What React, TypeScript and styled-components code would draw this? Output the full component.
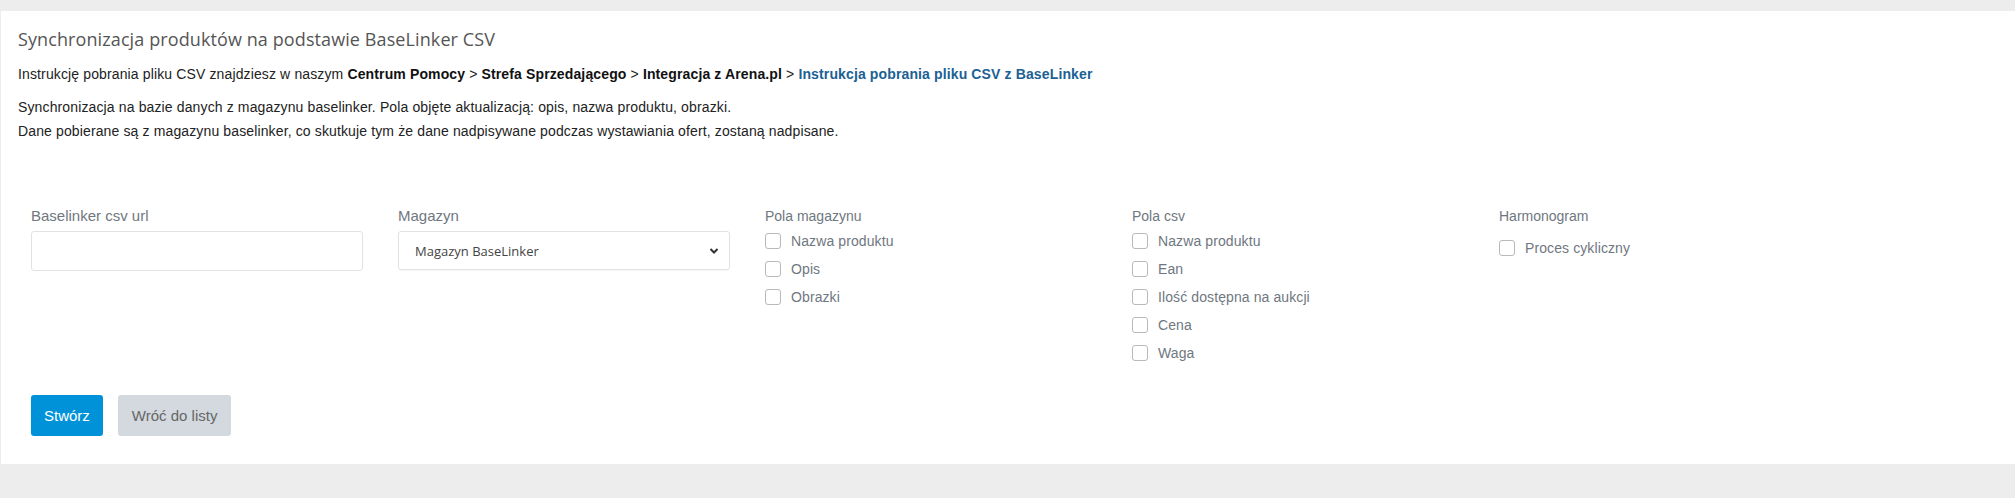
import React from "react";
import styled, { createGlobalStyle } from "styled-components";

const Global = createGlobalStyle`
  html, body { margin: 0; padding: 0; }
  body {
    background: #ededed;
    font-family: "Liberation Sans", Arial, sans-serif;
    width: 2015px;
    height: 498px;
    overflow: hidden;
  }
`;

const Page = styled.div`
  padding: 11px 0 0 1px;
`;

const Card = styled.section`
  background: #fff;
  height: 453px;
  box-sizing: border-box;
  padding: 16px 17px 0 17px;
`;

const Title = styled.h1`
  margin: 0;
  font-family: "Open Sans", sans-serif;
  font-weight: 400;
  font-size: 18px;
  line-height: 24px;
  letter-spacing: 0.1px;
  color: #555;
`;

const Text = styled.p<{ $top: number }>`
  margin: ${(p) => p.$top}px 0 0 0;
  font-size: 14px;
  line-height: 24px;
  letter-spacing: 0.13px;
  color: #222;
`;

const Strong = styled.b`
  font-weight: 700;
  color: #111;
`;

const Link = styled.a`
  font-weight: 700;
  color: #1b6193;
  text-decoration: none;
`;

const Form = styled.form`
  margin-top: 63px;
  padding-left: 13px;
`;

const Grid = styled.div`
  display: grid;
  grid-template-columns: repeat(5, 332px);
  column-gap: 35px;
  align-items: start;
`;

const Field = styled.div`
  display: flex;
  flex-direction: column;
`;

const Label = styled.label<{ $size?: number }>`
  font-size: ${(p) => p.$size ?? 14}px;
  line-height: 20px;
  color: #6f7780;
  margin-bottom: ${(p) => (p.$size ? 5 : 4)}px;
`;

const Input = styled.input`
  box-sizing: border-box;
  width: 100%;
  height: 40px;
  border: 1px solid #e2e2e2;
  border-radius: 3px;
  background: #fff;
  outline: none;
`;

const SelectBox = styled.div`
  box-sizing: border-box;
  width: 100%;
  height: 39px;
  border: 1px solid #e2e2e2;
  border-radius: 3px;
  box-shadow: 0 1px 1px rgba(0, 0, 0, 0.04);
  display: flex;
  align-items: center;
  justify-content: space-between;
  padding: 0 10px 0 16px;
  font-family: "Open Sans", sans-serif;
  font-size: 13px;
  color: #444;
`;

const CheckRow = styled.label`
  display: flex;
  align-items: center;
  gap: 10px;
  height: 28px;
  font-size: 14px;
  letter-spacing: 0.1px;
  color: #6f7780;
`;

const Box = styled.span`
  width: 16px;
  height: 16px;
  box-sizing: border-box;
  border: 1px solid #b9b9b9;
  border-radius: 3px;
  background: #fff;
`;

const CheckList = styled.div<{ $offset?: number }>`
  display: flex;
  flex-direction: column;
  margin-top: ${(p) => p.$offset ?? -3}px;
`;

const Buttons = styled.div`
  display: flex;
  gap: 15px;
  margin-top: 28px;
`;

const Button = styled.button<{ $primary?: boolean }>`
  height: 41px;
  padding: 0 ${(p) => (p.$primary ? 13 : 14)}px;
  border: none;
  border-radius: 3px;
  font-family: "Liberation Sans", Arial, sans-serif;
  font-size: 15px;
  background: ${(p) => (p.$primary ? "#0092d9" : "#d3d9de")};
  color: ${(p) => (p.$primary ? "#fff" : "#666")};
`;

const Chevron = () => (
  <svg width="10" height="8" viewBox="0 0 10 8">
    <path d="M1.5 2 L5 5.5 L8.5 2" stroke="#333" strokeWidth="2" fill="none" />
  </svg>
);

const Check = ({ label }: { label: string }) => (
  <CheckRow>
    <Box />
    {label}
  </CheckRow>
);

export default function App() {
  return (
    <Page>
      <Global />
      <Card>
        <Title>Synchronizacja produktów na podstawie BaseLinker CSV</Title>
        <Text $top={11}>
          Instrukcję pobrania pliku CSV znajdziesz w naszym <Strong>Centrum Pomocy</Strong> &gt;{" "}
          <Strong>Strefa Sprzedającego</Strong> &gt; <Strong>Integracja z Arena.pl</Strong> &gt;{" "}
          <Link>Instrukcja pobrania pliku CSV z BaseLinker</Link>
        </Text>
        <Text $top={9}>
          Synchronizacja na bazie danych z magazynu baselinker. Pola objęte aktualizacją: opis, nazwa produktu, obrazki.
          <br />
          Dane pobierane są z magazynu baselinker, co skutkuje tym że dane nadpisywane podczas wystawiania ofert, zostaną nadpisane.
        </Text>
        <Form>
          <Grid>
            <Field>
              <Label $size={15}>Baselinker csv url</Label>
              <Input />
            </Field>
            <Field>
              <Label $size={15}>Magazyn</Label>
              <SelectBox>
                Magazyn BaseLinker
                <Chevron />
              </SelectBox>
            </Field>
            <Field>
              <Label>Pola magazynu</Label>
              <CheckList>
                <Check label="Nazwa produktu" />
                <Check label="Opis" />
                <Check label="Obrazki" />
              </CheckList>
            </Field>
            <Field>
              <Label>Pola csv</Label>
              <CheckList>
                <Check label="Nazwa produktu" />
                <Check label="Ean" />
                <Check label="Ilość dostępna na aukcji" />
                <Check label="Cena" />
                <Check label="Waga" />
              </CheckList>
            </Field>
            <Field>
              <Label>Harmonogram</Label>
              <CheckList $offset={4}>
                <Check label="Proces cykliczny" />
              </CheckList>
            </Field>
          </Grid>
          <Buttons>
            <Button $primary>Stwórz</Button>
            <Button>Wróć do listy</Button>
          </Buttons>
        </Form>
      </Card>
    </Page>
  );
}
